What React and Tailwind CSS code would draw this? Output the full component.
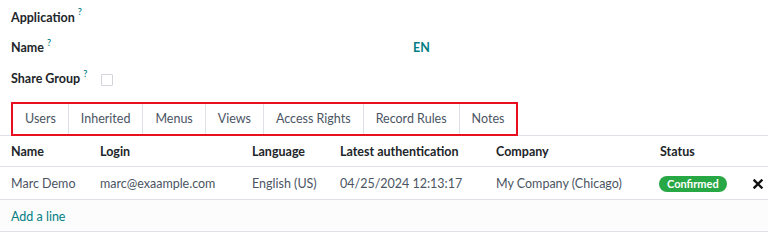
export default function App() {
  const font = { fontFamily: 'Lato, "Open Sans", sans-serif' };
  const tabs = ["Users", "Inherited", "Menus", "Views", "Access Rights", "Record Rules", "Notes"];
  const Q = () => <span className="relative -top-[6px] text-[#017e84] text-[9px] ml-[3px] font-semibold">?</span>;
  return (
    <div className="w-[768px] h-[240px] bg-white text-[12.5px] text-[#374151] overflow-hidden" style={font}>
      <div className="pl-[11px] pt-[3px]">
        <div className="h-[30px] flex items-center">
          <span className="font-bold text-[#212529]">Application</span>
          <Q />
        </div>
        <div className="h-[31px] flex items-center">
          <div className="w-[402px] flex items-center">
            <span className="font-bold text-[#212529]">Name</span>
            <Q />
          </div>
          <span className="font-bold text-[#017e84]">EN</span>
        </div>
        <div className="h-[31px] flex items-center">
          <span className="font-bold text-[#212529]">Share Group</span>
          <Q />
          <span className="ml-[14px] w-[12px] h-[12px] border border-[#d1d5db] rounded-[1px]"></span>
        </div>
      </div>
      <div className="mt-[7px] border-b border-[#dee2e6]">
        <div className="ml-[11px] inline-flex border-2 border-[#e8101e] h-[34px] -mb-px">
          {tabs.map((t, i) => (
            <div
              key={t}
              className={`flex items-center px-[12px] text-[#4b5563] ${i > 0 ? "border-l border-[#dee2e6]" : ""}`}
            >
              {t}
            </div>
          ))}
        </div>
      </div>
      <div className="flex h-[31px] items-center pt-[2px] border-b border-[#dee2e6] font-bold text-[#212529]">
        <div className="pl-[11px] w-[100px]">Name</div>
        <div className="w-[152px]">Login</div>
        <div className="w-[88px]">Language</div>
        <div className="w-[156px]">Latest authentication</div>
        <div className="w-[164px]">Company</div>
        <div>Status</div>
      </div>
      <div className="flex h-[33px] items-center pt-[2px] border-b border-[#dee2e6] text-[#4b5563]">
        <div className="pl-[11px] w-[100px]">Marc Demo</div>
        <div className="w-[152px]">marc@exaample.com</div>
        <div className="w-[88px]">English (US)</div>
        <div className="w-[156px]">04/25/2024 12:13:17</div>
        <div className="w-[163px]">My Company (Chicago)</div>
        <div className="w-[94px]">
          <span className="inline-flex items-center h-[16px] px-[8px] rounded-full bg-[#28a745] text-white text-[11px] font-bold">
            Confirmed
          </span>
        </div>
        <svg width="10" height="10" viewBox="0 0 10 10">
          <path d="M1.5 1.5 L8.5 8.5 M8.5 1.5 L1.5 8.5" stroke="#111" strokeWidth="2.4" strokeLinecap="square" />
        </svg>
      </div>
      <div className="flex h-[32px] items-center pt-[4px] border-b border-[#dee2e6] bg-[#fcfcfc]">
        <span className="pl-[11px] text-[#017e84]">Add a line</span>
      </div>
    </div>
  );
}
